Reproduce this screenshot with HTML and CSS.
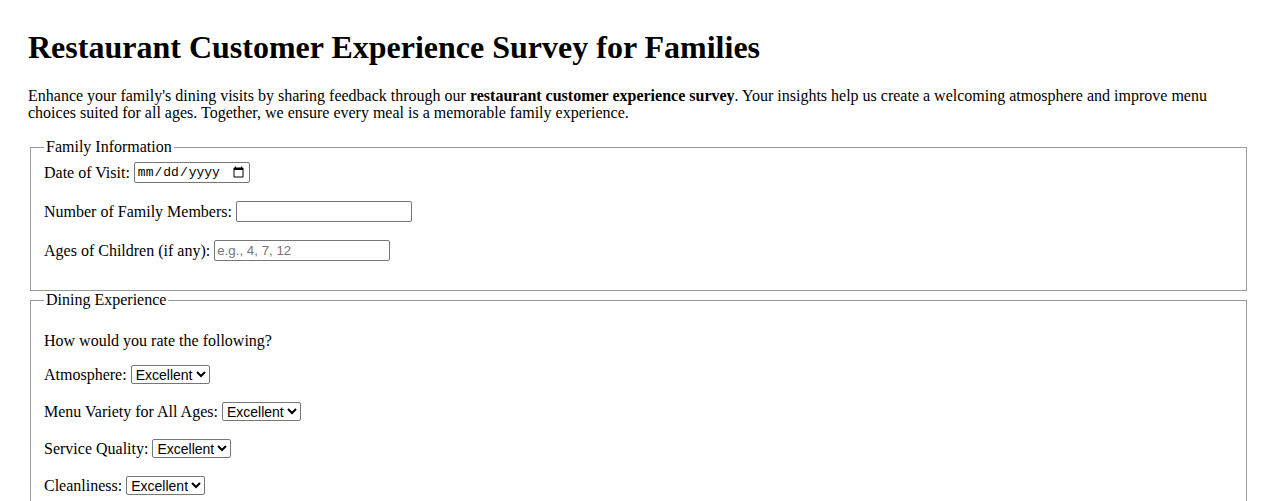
FILE: index.html
```html
<!DOCTYPE html>
<html lang="en">
<head>
<meta charset="utf-8">
<title>Restaurant Customer Experience Survey for Families</title>
<link rel="stylesheet" href="styles.css">
</head>
<body>
<h1 class="title">Restaurant Customer Experience Survey for Families</h1>
<p class="intro">Enhance your family's dining visits by sharing feedback through our <strong>restaurant customer experience survey</strong>. Your insights help us create a welcoming atmosphere and improve menu choices suited for all ages. Together, we ensure every meal is a memorable family experience.</p>
<form class="survey">
  <fieldset class="section">
    <legend class="legend">Family Information</legend>
    <div class="row"><label for="date">Date of Visit:</label><input class="field date" type="date" id="date"></div>
    <div class="row"><label for="members">Number of Family Members:</label><input class="field" type="number" id="members"></div>
    <div class="row"><label for="ages">Ages of Children (if any):</label><input class="field" type="text" id="ages" placeholder="e.g., 4, 7, 12"></div>
  </fieldset>
  <fieldset class="section">
    <legend class="legend">Dining Experience</legend>
    <p class="question">How would you rate the following?</p>
    <div class="row row-select"><label for="atm">Atmosphere:</label><select class="choice" id="atm"><option>Excellent</option><option>Good</option><option>Fair</option><option>Poor</option></select></div>
    <div class="row row-select"><label for="menu">Menu Variety for All Ages:</label><select class="choice" id="menu"><option>Excellent</option><option>Good</option><option>Fair</option><option>Poor</option></select></div>
    <div class="row row-select"><label for="svc">Service Quality:</label><select class="choice" id="svc"><option>Excellent</option><option>Good</option><option>Fair</option><option>Poor</option></select></div>
    <div class="row row-select"><label for="clean">Cleanliness:</label><select class="choice" id="clean"><option>Excellent</option><option>Good</option><option>Fair</option><option>Poor</option></select></div>
  </fieldset>
</form>
</body>
</html>
```
FILE: styles.css
```css
body {
  margin: 0;
  padding: 29px 29px 0 28px;
  font-family: "Liberation Serif", "Times New Roman", serif;
  font-size: 16px;
  color: #000;
  background: #fff;
}
.title {
  font-size: 32px;
  font-weight: bold;
  margin: 0 0 21px;
  line-height: 37px;
}
.intro {
  margin: 0 0 17px;
  line-height: 17px;
}
.section {
  margin: 0 2px;
  padding: 5px 12px 12px 13px;
  border: 1px solid #9a9a9a;
}
.legend {
  padding: 0 2px;
}
.row {
  display: flex;
  align-items: center;
  gap: 4px;
  height: 23px;
  margin: 0 0 16px;
}
.row-select {
  height: 21px;
}
.question {
  margin: 18px 0 14px;
}
.field {
  font-family: "Liberation Sans", Arial, sans-serif;
  font-size: 13.333px;
  border: 1px solid #767676;
  border-radius: 2px;
  padding: 1px 2px;
  margin: 0;
  width: 170px;
  height: 17px;
  box-sizing: content-box;
}
.field::placeholder {
  color: #757575;
}
.date {
  font-family: "Liberation Mono", "DejaVu Sans Mono", monospace;
  font-size: 13px;
  width: 110px;
}
.choice {
  font-family: "Liberation Sans", Arial, sans-serif;
  font-size: 14px;
  border: 1px solid #767676;
  border-radius: 2px;
  background: #fff;
  color: #000;
  height: 19px;
  margin: 0;
}
```
